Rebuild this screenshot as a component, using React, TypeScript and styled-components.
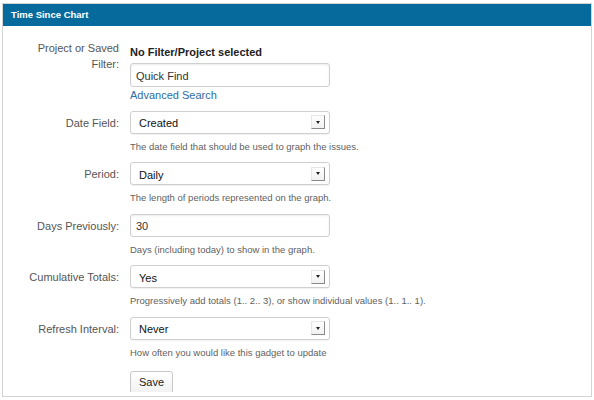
import React from "react";
import styled, { createGlobalStyle } from "styled-components";

const Global = createGlobalStyle`
  html, body { margin: 0; padding: 0; background: #ffffff; }
  body { font-family: "Liberation Sans", Arial, Helvetica, sans-serif; }
  * { box-sizing: border-box; }
`;

const Panel = styled.section`
  margin: 3px 0 0 2px;
  width: 590px;
  border: 1px solid #d3d3d3;
  padding-bottom: 4px;
  background: #fff;
`;

const Header = styled.header`
  height: 22px;
  line-height: 22px;
  padding: 0 8px;
  background: #066a9c;
  color: #fff;
  font-weight: bold;
  font-size: 9.5px;
`;

const Body = styled.div`
  height: 366px;
  overflow: hidden;
  padding: 14px 0 0 16px;
  display: flex;
  flex-direction: column;
  gap: 8.5px;
`;

const Row = styled.div`
  display: grid;
  grid-template-columns: 100px 200px;
  column-gap: 11px;
  align-items: start;
`;

const Label = styled.label<{ $multi?: boolean }>`
  text-align: right;
  font-size: 11px;
  color: #555;
  line-height: ${(p) => (p.$multi ? "16px" : "23px")};
  padding-top: ${(p) => (p.$multi ? "0" : "1px")};
`;

const Field = styled.div<{ $pad?: number }>`
  display: flex;
  flex-direction: column;
  padding-top: ${(p) => p.$pad ?? 0}px;
`;

const Strong = styled.div`
  font-size: 11px;
  font-weight: bold;
  color: #222;
  line-height: 16px;
`;

const TextInput = styled.div<{ $h?: number; $top?: number }>`
  height: ${(p) => p.$h ?? 23}px;
  margin-top: ${(p) => p.$top ?? 0}px;
  border: 1px solid #cfcfcf;
  border-radius: 3px;
  box-shadow: inset 0 1px 2px rgba(0, 0, 0, 0.08);
  padding: 1px 0 0 5px;
  display: flex;
  align-items: center;
  font-size: 11px;
  color: #333;
  background: #fff;
`;

const SelectBox = styled.div`
  height: 23px;
  border: 1px solid #cfcfcf;
  border-radius: 3px;
  box-shadow: 0 1px 1px rgba(0, 0, 0, 0.06);
  padding: 2px 4px 0 8px;
  display: flex;
  align-items: center;
  justify-content: space-between;
  font-size: 11px;
  color: #111;
  background: #fff;
`;

const Arrow = styled.span`
  width: 14px;
  height: 14px;
  margin-top: -2px;
  border-top: 1px solid #e6e6e6;
  border-left: 1px solid #e6e6e6;
  border-right: 1px solid #8a8a8a;
  border-bottom: 1px solid #8a8a8a;
  background: linear-gradient(#ffffff, #f1f1f1);
  display: flex;
  align-items: center;
  justify-content: center;
  &::after {
    content: "";
    border-left: 2.5px solid transparent;
    border-right: 2.5px solid transparent;
    border-top: 3px solid #222;
  }
`;

const Link = styled.a`
  font-size: 11px;
  line-height: 14px;
  margin-top: 1px;
  color: #2d6ca3;
  text-decoration: none;
`;

const Desc = styled.div`
  margin-top: 6px;
  font-size: 9.5px;
  line-height: 14px;
  color: #5f5f5f;
  white-space: nowrap;
`;

const Button = styled.button`
  margin-top: 2.5px;
  width: 43px;
  height: 26px;
  border: 1px solid #c8c8c8;
  border-radius: 3px;
  background: linear-gradient(#ffffff, #f0f0f0);
  font-family: "Liberation Sans", Arial, sans-serif;
  font-size: 11px;
  color: #222;
  padding: 0 0 3px;
`;

type SelectRow = { label: string; value: string; desc: string; input?: boolean };

const rows: SelectRow[] = [
  { label: "Date Field:", value: "Created", desc: "The date field that should be used to graph the issues." },
  { label: "Period:", value: "Daily", desc: "The length of periods represented on the graph." },
  { label: "Days Previously:", value: "30", desc: "Days (including today) to show in the graph.", input: true },
  { label: "Cumulative Totals:", value: "Yes", desc: "Progressively add totals (1.. 2.. 3), or show individual values (1.. 1.. 1)." },
  { label: "Refresh Interval:", value: "Never", desc: "How often you would like this gadget to update" },
];

export default function App() {
  return (
    <>
      <Global />
      <Panel>
        <Header>Time Since Chart</Header>
        <Body>
          <Row>
            <Label $multi>Project or Saved Filter:</Label>
            <Field $pad={4}>
              <Strong>No Filter/Project selected</Strong>
              <TextInput $h={24} $top={3}>Quick Find</TextInput>
              <Link href="#">Advanced Search</Link>
            </Field>
          </Row>
          {rows.map((r) => (
            <Row key={r.label}>
              <Label>{r.label}</Label>
              <Field>
                {r.input ? (
                  <TextInput>{r.value}</TextInput>
                ) : (
                  <SelectBox>
                    <span>{r.value}</span>
                    <Arrow />
                  </SelectBox>
                )}
                <Desc>{r.desc}</Desc>
              </Field>
            </Row>
          ))}
          <Row>
            <span />
            <Field>
              <Button>Save</Button>
            </Field>
          </Row>
        </Body>
      </Panel>
    </>
  );
}
